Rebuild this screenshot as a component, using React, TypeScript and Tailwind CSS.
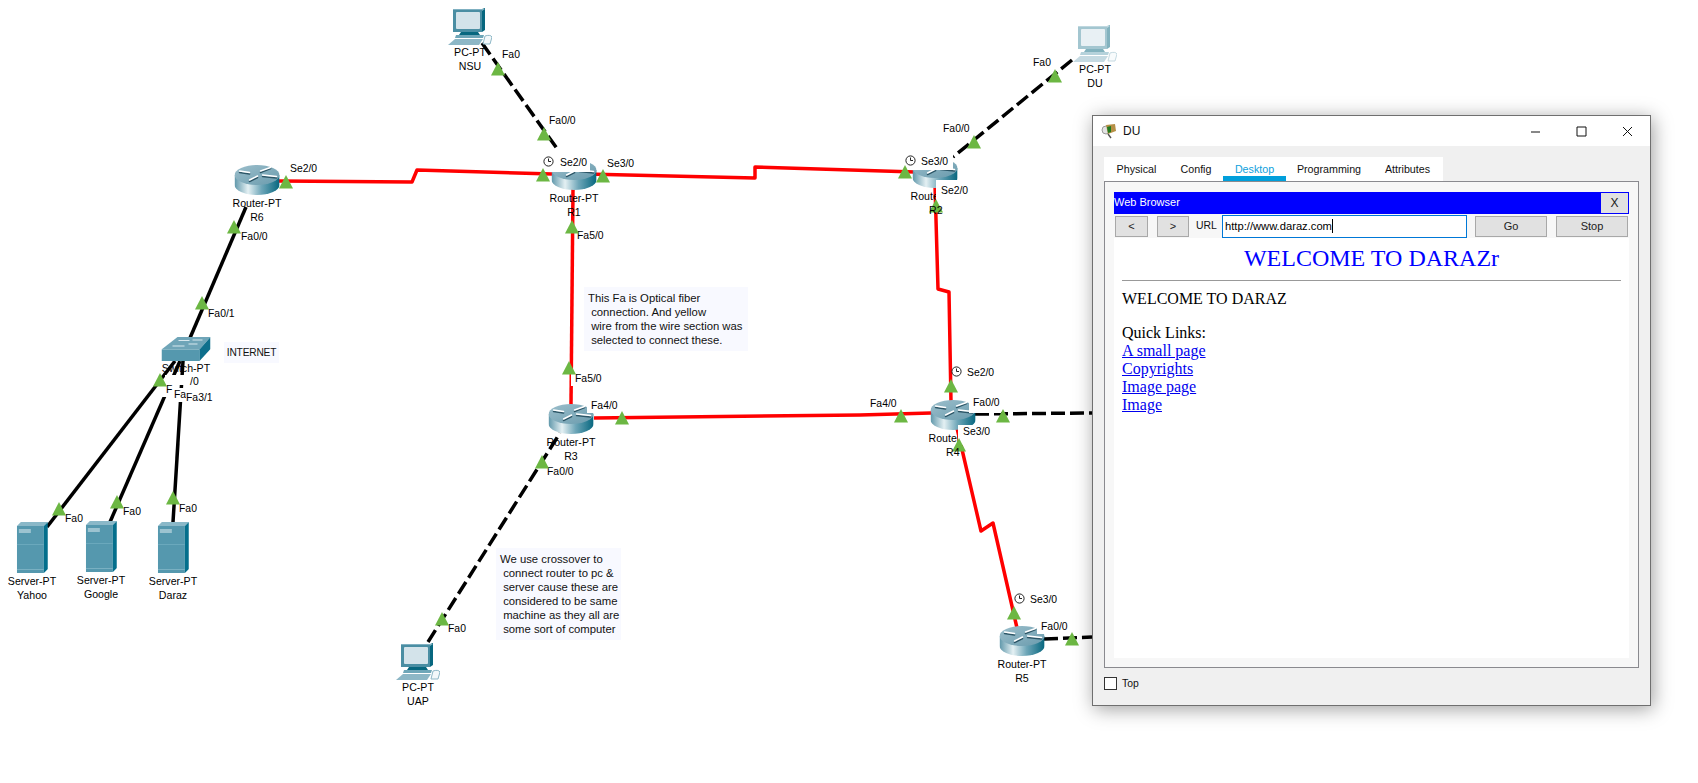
import type { ReactNode } from 'react'

const GREEN = '#6cb743'

// link lights, centre points
const lights = [
  [286, 182], [234, 227], [202, 303], [160, 380], [59, 509], [117, 502], [173, 498],
  [498, 69], [544, 134], [543, 175], [603, 176], [572, 227], [569, 368], [622, 418],
  [442, 619], [542, 462], [1055, 76], [974, 142], [905, 172], [936, 206], [951, 386],
  [901, 416], [1003, 416], [959, 445], [1014, 613], [1072, 639],
]

function RouterIcon() {
  return (
    <svg width="45" height="31" viewBox="0 0 45 31">
      <defs>
        <linearGradient id="routerSide" x1="0" x2="1" y1="0" y2="0">
          <stop offset="0" stopColor="#5f97aa" />
          <stop offset="0.3" stopColor="#e4f0f3" />
          <stop offset="0.6" stopColor="#6ea6b8" />
          <stop offset="1" stopColor="#07677f" />
        </linearGradient>
        <linearGradient id="routerTop" x1="0" x2="1" y1="0" y2="1">
          <stop offset="0" stopColor="#9cbfcc" />
          <stop offset="1" stopColor="#6a9bad" />
        </linearGradient>
      </defs>
      <path d="M0 10 V20 A22.5 10 0 0 0 45 20 V10 Z" fill="url(#routerSide)" />
      <ellipse cx="22.5" cy="10" rx="22.5" ry="10" fill="url(#routerTop)" />
      <g fill="none" strokeLinecap="round">
        <path d="M5 7.5 L15 9 M26 7.5 L36 3.5 M15 16.5 L23 12.5 M28 11.5 L42 13" stroke="#2c5566" strokeWidth="1.6" />
        <path d="M5 6 L15 7.5 M26 6 L36 2.5 M15 15 L23 11 M28 10 L42 11.5" stroke="#fff" strokeWidth="1.4" />
      </g>
    </svg>
  )
}

function PcIcon({ pale }: { pale?: boolean }) {
  return (
    <svg className={pale ? 'opacity-50' : ''} width="44" height="37" viewBox="0 0 44 37">
      <path d="M34 1 L37 0 V22 L34 24 Z" fill="#07677f" />
      <path d="M5 1 H37 L34 3 H5 Z" fill="#7fb0c1" />
      <rect x="5" y="2" width="29" height="22" fill="#4a8ea3" />
      <rect x="8" y="4" width="24" height="17" rx="1" fill="#d3e3ea" />
      <path d="M13 24 H30 L32 27 H11 Z" fill="#07677f" />
      <path d="M8 27 H36 L35 30 H7 Z" fill="#6ea6b8" />
      <path d="M0 37 L7 31 H35 L31 37 Z" fill="#8db7c6" />
      <path d="M37 28 C40 27 43 27 44 29 L42 36 H35 Z" fill="#f3f8fa" stroke="#8db7c6" strokeWidth="1" />
    </svg>
  )
}

function ServerIcon() {
  return (
    <svg width="31" height="52" viewBox="0 0 31 52">
      <path d="M0 4 L4 0 H31 L27 4 Z" fill="#8ab8c8" />
      <rect x="0" y="4" width="27" height="47" fill="#5598ae" />
      <path d="M27 4 L31 0 V47 L27 51 Z" fill="#046f8c" />
      <rect x="2" y="7" width="12" height="4" fill="#9cc3d0" />
      <rect x="0" y="22" width="27" height="1" fill="#6aa8bc" />
      <rect x="0" y="47" width="27" height="1" fill="#79b0c2" />
    </svg>
  )
}

function SwitchIcon() {
  return (
    <svg width="49" height="24" viewBox="0 0 49 24">
      <path d="M0 12.5 L16 0 H49 L38 12.5 Z" fill="#6fa5b8" />
      <rect x="0" y="12.5" width="38" height="11.5" fill="#5598ae" />
      <path d="M38 12.5 L49 0 V12 L38 24 Z" fill="#0e6f8c" />
      <path d="M17 3.5 H28 M31 3 H41 M11 9 H23 M27 7 H36" stroke="#d8e8ee" strokeWidth="1" />
    </svg>
  )
}

function Clock() {
  return (
    <svg width="11" height="11" viewBox="0 0 11 11" className="shrink-0">
      <circle cx="5.5" cy="5.5" r="4.6" fill="#fff" stroke="#222" strokeWidth="1" />
      <path d="M5.5 2.5 V5.5 H8" fill="none" stroke="#222" strokeWidth="1" />
    </svg>
  )
}

// a device on the canvas: icon with its name lines under it, left-* is the centre
function Node({ className, icon, lines }: { className: string; icon: ReactNode; lines: string[] }) {
  return (
    <div className={`absolute flex -translate-x-1/2 flex-col items-center text-[10.6px] leading-[14px] text-black ${className}`}>
      {icon}
      {lines.map((line) => (
        <span key={line} className="whitespace-nowrap">{line}</span>
      ))}
    </div>
  )
}

function Label({ className, children }: { className: string; children: ReactNode }) {
  return <div className={`absolute whitespace-nowrap text-[10.4px] leading-[14px] text-black ${className}`}>{children}</div>
}

function Note({ className, lines }: { className: string; lines: string[] }) {
  return (
    <div className={`absolute bg-[#f8f9ff] text-[11.3px] leading-[14px] whitespace-pre text-[#111] ${className}`}>
      {lines.map((line) => (
        <div key={line}>{line}</div>
      ))}
    </div>
  )
}

function Network() {
  return (
    <>
      <svg className="absolute inset-0" width="1698" height="783" fill="none" strokeWidth="3.5">
        <g stroke="#ff0000" strokeLinejoin="round">
          <polyline points="279,181 412,182 417,170 552,174" />
          <polyline points="585,174 755,178 755,167 915,172" />
          <polyline points="573,189 571,405" />
          <polyline points="594,418 860,415 931,413" />
          <polyline points="935,185 938,289 949,292 951,402" />
          <polyline points="957,428 981,531 993,523 1017,628" />
        </g>
        <g stroke="#000" strokeLinecap="butt">
          <line x1="246" y1="207" x2="190" y2="338" />
          <line x1="175" y1="361" x2="47" y2="527" />
          <line x1="180" y1="361" x2="110" y2="522" />
          <line x1="183" y1="361" x2="173" y2="522" />
        </g>
        <g stroke="#000" strokeDasharray="14 5">
          <line x1="482" y1="43" x2="558" y2="150" />
          <line x1="1072" y1="60" x2="953" y2="157" />
          <line x1="428" y1="642" x2="560" y2="433" />
          <line x1="975" y1="414" x2="1092" y2="413" />
          <line x1="1044" y1="639" x2="1092" y2="637" />
        </g>
      </svg>

      <Node className="left-[257px] top-[165px]" icon={<RouterIcon />} lines={['Router-PT', 'R6']} />
      <Node className="left-[574px] top-[160px]" icon={<RouterIcon />} lines={['Router-PT', 'R1']} />
      <Node className="left-[935px] top-[158px]" icon={<RouterIcon />} lines={['Router-PT']} />
      <Node className="left-[571px] top-[404px]" icon={<RouterIcon />} lines={['Router-PT', 'R3']} />
      <Node className="left-[953px] top-[400px]" icon={<RouterIcon />} lines={['Router-PT']} />
      <Node className="left-[1022px] top-[626px]" icon={<RouterIcon />} lines={['Router-PT', 'R5']} />
      <Node className="left-[186px] top-[337px]" icon={<SwitchIcon />} lines={['Switch-PT']} />
      <Node className="left-[32px] top-[522px]" icon={<ServerIcon />} lines={['Server-PT', 'Yahoo']} />
      <Node className="left-[101px] top-[521px]" icon={<ServerIcon />} lines={['Server-PT', 'Google']} />
      <Node className="left-[173px] top-[522px]" icon={<ServerIcon />} lines={['Server-PT', 'Daraz']} />
      <Node className="left-[470px] top-[8px]" icon={<PcIcon />} lines={['PC-PT', 'NSU']} />
      <Node className="left-[418px] top-[643px]" icon={<PcIcon />} lines={['PC-PT', 'UAP']} />
      <Node className="left-[1095px] top-[25px]" icon={<PcIcon pale />} lines={['PC-PT', 'DU']} />

      <Label className="left-[290px] top-[162px]">Se2/0</Label>
      <Label className="left-[241px] top-[230px]">Fa0/0</Label>
      <Label className="left-[208px] top-[307px]">Fa0/1</Label>

      {/* stacked switch port labels, each one hides most of the one before */}
      <Label className="left-[165px] top-[375px] h-[10px] w-[42px] overflow-hidden bg-white pl-[25px]">/0</Label>
      <Label className="left-[159px] top-[383px] w-[15px] overflow-hidden bg-white pl-[7px]">F</Label>
      <Label className="left-[174px] top-[388px] w-[12px] overflow-hidden bg-white">Fa</Label>
      <Label className="left-[186px] top-[391px] bg-white">Fa3/1</Label>

      <Label className="left-[65px] top-[512px]">Fa0</Label>
      <Label className="left-[123px] top-[505px]">Fa0</Label>
      <Label className="left-[179px] top-[502px]">Fa0</Label>
      <Label className="left-[502px] top-[48px]">Fa0</Label>
      <Label className="left-[549px] top-[114px]">Fa0/0</Label>
      <Label className="left-[607px] top-[157px] bg-white">Se3/0</Label>
      <Label className="left-[577px] top-[229px]">Fa5/0</Label>
      <Label className="left-[571px] top-[372px] bg-white pl-[4px] pr-[2px]">Fa5/0</Label>
      <Label className="left-[587px] top-[399px] bg-white pl-[4px] pr-[2px]">Fa4/0</Label>
      <Label className="left-[547px] top-[465px]">Fa0/0</Label>
      <Label className="left-[448px] top-[622px]">Fa0</Label>
      <Label className="left-[1033px] top-[56px]">Fa0</Label>
      <Label className="left-[943px] top-[122px]">Fa0/0</Label>
      <Label className="left-[936px] top-[180px] h-[24px] bg-white pl-[5px] pr-[2px] pt-[4px]">Se2/0</Label>
      <Label className="left-[868px] top-[397px] bg-white pl-[2px] pr-[2px]">Fa4/0</Label>
      <Label className="left-[969px] top-[396px] bg-white pl-[4px] pr-[1px] pb-[3px]">Fa0/0</Label>
      <Label className="left-[958px] top-[425px] h-[20px] bg-white pl-[5px] pr-[1px]">Se3/0</Label>
      <Label className="left-[1037px] top-[620px] bg-white pl-[4px] pr-[2px]">Fa0/0</Label>

      <Label className="left-[542px] top-[155px] flex h-[17px] w-[48px] items-start gap-[6px] bg-white pl-[1px] pt-[1px]">
        <Clock />
        Se2/0
      </Label>
      <Label className="left-[905px] top-[154px] flex h-[16px] w-[48px] items-start gap-[5px] bg-white pt-[1px]">
        <Clock />
        Se3/0
      </Label>
      <Label className="left-[951px] top-[366px] flex items-start gap-[5px]">
        <Clock />
        Se2/0
      </Label>
      <Label className="left-[1014px] top-[593px] flex items-start gap-[5px]">
        <Clock />
        Se3/0
      </Label>

      <svg className="absolute inset-0" width="1698" height="783">
        {lights.map(([x, y]) => (
          <polygon key={`${x}-${y}`} points={`${x},${y - 7} ${x - 7},${y + 6.5} ${x + 7},${y + 6.5}`} fill={GREEN} />
        ))}
      </svg>

      <Label className="left-[929px] top-[203px] text-[10.6px]">R2</Label>
      <Label className="left-[946px] top-[445px] text-[10.6px]">R4</Label>

      <Note
        className="left-[584px] top-[287px] h-[64px] w-[164px] pl-[4px] pt-[4px]"
        lines={['This Fa is Optical fiber', ' connection. And yellow', ' wire from the wire section was', ' selected to connect these.']}
      />
      <Note
        className="left-[496px] top-[548px] h-[92px] w-[125px] pl-[4px] pt-[4px]"
        lines={['We use crossover to', ' connect router to pc &', ' server cause these are', ' considered to be same', ' machine as they all are', ' some sort of computer']}
      />
      <div className="absolute left-[224px] top-[342px] flex h-[21px] w-[55px] items-center justify-center bg-[#f8f9ff] text-[10.2px] tracking-[-0.2px] text-[#111]">
        INTERNET
      </div>
    </>
  )
}

function WinGlyph({ d }: { d: string }) {
  return (
    <button className="flex h-[30px] w-[46px] items-center justify-center">
      <svg width="11" height="11" viewBox="0 0 11 11" fill="none" stroke="#111" strokeWidth="1">
        <path d={d} />
      </svg>
    </button>
  )
}

function WinButton({ className, children }: { className: string; children: ReactNode }) {
  return (
    <button className={`flex h-[21px] items-center justify-center border border-[#a8a8a8] bg-[#e1e1e1] text-[11px] text-[#222] ${className}`}>
      {children}
    </button>
  )
}

const tabs = [
  { name: 'Physical', width: 'w-[65px]' },
  { name: 'Config', width: 'w-[54px]' },
  { name: 'Desktop', width: 'w-[63px]' },
  { name: 'Programming', width: 'w-[86px]' },
  { name: 'Attributes', width: 'w-[71px]' },
]

function DeviceWindow() {
  return (
    <div className="absolute left-[1092px] top-[115px] flex h-[591px] w-[559px] flex-col border border-[#6f6f6f] bg-[#f0f0f0] shadow-[2px_3px_18px_rgba(0,0,0,0.38)]">
      {/* title bar */}
      <div className="flex h-[30px] items-center bg-white pl-[8px]">
        <svg width="16" height="16" viewBox="0 0 16 16">
          <circle cx="5" cy="7" r="4" fill="#e3e3e3" stroke="#9a9a9a" strokeWidth="1" />
          <path d="M7 11 L10 15" stroke="#555" strokeWidth="1.4" />
          <path d="M5 2 L14 1 L15 8 L7 11 Z" fill="#b58f45" />
          <path d="M6 4 L10 3 L10 9 L7 10 Z" fill="#1f7a1f" />
        </svg>
        <span className="ml-[6px] text-[12px] text-[#111]">DU</span>
        <div className="ml-auto flex">
          <WinGlyph d="M1 6 H10" />
          <WinGlyph d="M1 1 H10 V10 H1 Z" />
          <WinGlyph d="M1 1 L10 10 M10 1 L1 10" />
        </div>
      </div>

      <div className="flex flex-1 flex-col pl-[11px] pr-[11px] pt-[11px]">
        {/* tabs */}
        <div className="flex h-[24px] w-fit bg-white">
          {tabs.map((tab) =>
            tab.name === 'Desktop' ? (
              <div key={tab.name} className={`flex items-center justify-center text-[10.7px] text-[#0ea0dc] shadow-[inset_0_-5px_0_#009fdb] ${tab.width}`}>
                {tab.name}
              </div>
            ) : (
              <div key={tab.name} className={`flex items-center justify-center text-[10.7px] text-[#111] ${tab.width}`}>
                {tab.name}
              </div>
            ),
          )}
        </div>

        {/* panel */}
        <div className="flex h-[487px] flex-col border border-[#8a8a8f] bg-[#f7f7f7] pb-[9px] pl-[9px] pr-[9px] pt-[10px]">
          <div className="flex h-[22px] shrink-0 items-center justify-between bg-[#0000ff] pr-[1px]">
            <span className="-mt-[2px] text-[11px] text-white">Web Browser</span>
            <button className="flex h-[20px] w-[27px] items-center justify-center bg-[#e1e1e1] text-[12px] text-[#222]">X</button>
          </div>

          <div className="flex h-[24px] shrink-0 items-center pl-[1px]">
            <WinButton className="w-[33px]">&lt;</WinButton>
            <WinButton className="ml-[9px] w-[32px]">&gt;</WinButton>
            <span className="ml-[7px] w-[26px] text-[10.4px] text-[#111]">URL</span>
            <div className="flex h-[23px] w-[245px] items-center border border-[#0078d7] bg-white pl-[2px] text-[11.2px] text-black">
              http://www.daraz.com
              <span className="h-[14px] w-px bg-black" />
            </div>
            <WinButton className="ml-[8px] w-[72px]">Go</WinButton>
            <WinButton className="ml-[9px] w-[72px]">Stop</WinButton>
          </div>

          {/* browser page */}
          <div className="flex-1 bg-white px-[8px] pt-[6px] font-['Liberation_Serif',serif] text-[16px] leading-[18px] text-black">
            <h1 className="text-center text-[24px] leading-[28px] text-[#0000ff]">WELCOME TO DARAZr</h1>
            <hr className="mt-[8px] border-t border-[#999]" />
            <p className="mt-[9px]">WELCOME TO DARAZ</p>
            <p className="mt-[16px]">Quick Links:</p>
            <a className="block text-[#0000ee] underline">A small page</a>
            <a className="block text-[#0000ee] underline">Copyrights</a>
            <a className="block text-[#0000ee] underline">Image page</a>
            <a className="block text-[#0000ee] underline">Image</a>
          </div>
        </div>

        {/* footer */}
        <div className="flex items-start gap-[5px] pt-[9px]">
          <div className="h-[13px] w-[13px] border border-[#333] bg-white" />
          <span className="text-[10.4px] leading-[14px] text-[#111]">Top</span>
        </div>
      </div>
    </div>
  )
}

export default function App() {
  return (
    <div className="relative h-[783px] w-full overflow-hidden bg-white font-['Liberation_Sans',sans-serif]">
      <Network />
      <DeviceWindow />
    </div>
  )
}
